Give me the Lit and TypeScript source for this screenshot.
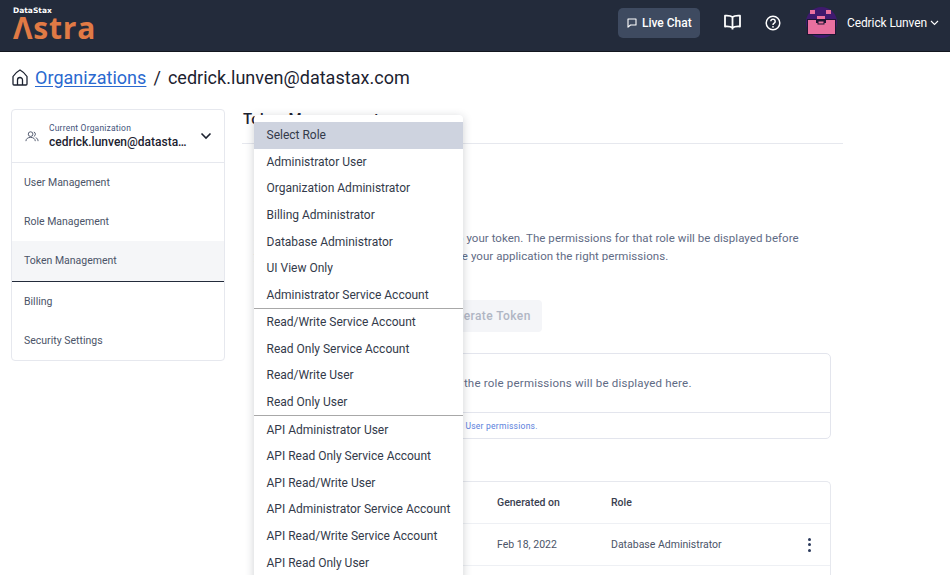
import { LitElement, html, css, svg } from "lit";
import { customElement } from "lit/decorators.js";

const ROLE_GROUPS = [
  [
    "Select Role",
    "Administrator User",
    "Organization Administrator",
    "Billing Administrator",
    "Database Administrator",
    "UI View Only",
    "Administrator Service Account",
  ],
  ["Read/Write Service Account", "Read Only Service Account", "Read/Write User", "Read Only User"],
  [
    "API Administrator User",
    "API Read Only Service Account",
    "API Read/Write User",
    "API Administrator Service Account",
    "API Read/Write Service Account",
    "API Read Only User",
  ],
];

const NAV = ["User Management", "Role Management", "Token Management", "Billing", "Security Settings"];

const chatIcon = svg`<path d="M1 1h8v6H3.500L1 9.200z" fill="none" stroke="currentColor" stroke-width="1.100" stroke-linejoin="round"/>`;
const bookIcon = svg`<path d="M8.500 3C7 1.800 4 1.500 1 1.700v10.800c3-.2 6 .1 7.500 1.300 1.500-1.200 4.500-1.500 7.500-1.300V1.700C13 1.500 10 1.800 8.500 3zM8.500 3v12.500" fill="none" stroke="currentColor" stroke-width="1.800" stroke-linejoin="round"/>`;
const helpIcon = svg`<circle cx="8" cy="8" r="6.800" fill="none" stroke="currentColor" stroke-width="1.500"/><path d="M5.800 6.300a2.200 2.200 0 1 1 3.400 1.900C8.400 8.700 8 9 8 9.900" fill="none" stroke="currentColor" stroke-width="1.500"/><circle cx="8" cy="11.800" r=".9" fill="currentColor"/>`;
const avatar = svg`
  <circle cx="15.500" cy="15.500" r="15.500" fill="#3f1a6e"/>
  <rect x="1.500" y="12.500" width="28" height="15" fill="#e9709f" stroke="#1f1433"/>
  <rect x="10" y="12" width="10" height="4" fill="#1f1433"/>
  <rect x="12" y="14" width="6" height="3" fill="#e9709f" stroke="#1f1433"/>
  <rect x="11" y="9" width="8" height="3" fill="#e9709f"/>
  <rect x="4" y="3" width="5" height="4" fill="#e9709f"/>
  <rect x="20" y="3" width="5" height="4" fill="#e9709f"/>`;
const homeIcon = svg`<path d="M1 7.500C3 4.500 5.500 2.300 8 1c2.500 1.300 5 3.500 7 6.500V15a1 1 0 0 1-1 1H2a1 1 0 0 1-1-1zM5.500 16v-5a2.500 2.500 0 0 1 5 0v5" fill="none" stroke="#1c2230" stroke-width="1.300" stroke-linejoin="round"/>`;
const usersIcon = svg`<circle cx="6" cy="4" r="2.500" fill="none" stroke="currentColor"/><path d="M1 11.500c0-2.500 2-4 5-4s5 1.500 5 4M9.500 1.700a2.500 2.500 0 0 1 0 4.700M11.500 7.800c1.500.5 2.500 1.800 2.500 3.700" fill="none" stroke="currentColor"/>`;

@customElement("app-root")
export class AppRoot extends LitElement {
  static styles = css`
    :host {
      display: block;
      position: relative;
      width: 950px;
      height: 575px;
      overflow: hidden;
      background: #fff;
      font-family: Roboto, "Liberation Sans", sans-serif;
      color: #1c2230;
    }

    * {
      box-sizing: border-box;
    }

    svg {
      display: block;
      flex: none;
    }

    .topbar {
      height: 52px;
      background: #232b3b;
      border-bottom: 1px solid #12161f;
      display: flex;
      align-items: center;
      padding: 0 0 6px 13px;
      color: #fff;
    }

    .logo {
      display: flex;
      flex-direction: column;
      margin-top: 2px;
    }

    .logo-top {
      font-size: 7.500px;
      font-weight: 700;
      line-height: 8px;
      font-family: "DejaVu Sans", sans-serif;
    }

    .logo-name {
      font-family: "Open Sans", sans-serif;
      font-size: 30px;
      line-height: 25px;
      font-weight: 700;
      color: #e07a45;
      letter-spacing: 0.8px;
    }

    .chat {
      margin-left: auto;
      width: 82px;
      height: 30px;
      background: #3e4a60;
      border-radius: 5px;
      display: flex;
      align-items: center;
      gap: 5px;
      padding-left: 9px;
      font-size: 12px;
      font-weight: 500;
    }

    .book {
      margin-left: 24px;
    }

    .help {
      margin-left: 24px;
    }

    .avatar {
      margin-left: 25px;
    }

    .user {
      margin-left: 10px;
      margin-right: 11px;
      display: flex;
      align-items: center;
      gap: 3px;
      font-size: 12px;
      letter-spacing: -0.1px;
    }

    .crumbs {
      height: 57px;
      padding: 0 0 7px 12px;
      display: flex;
      align-items: center;
      font-size: 18px;
      letter-spacing: 0.03px;
    }

    .crumbs a {
      margin-left: 7px;
      color: #2a69cf;
      text-decoration: underline;
      text-underline-offset: 2px;
    }

    .crumbs span {
      margin-left: 7px;
    }

    .body {
      display: flex;
      align-items: flex-start;
    }

    .side {
      width: 214px;
      margin-left: 11px;
      border: 1px solid #e6e8ee;
      border-radius: 4px;
      color: #4b5468;
      font-size: 10.500px;
    }

    .org {
      height: 53px;
      padding-left: 13px;
      display: flex;
      align-items: center;
      border-bottom: 1px solid #e6e8ee;
    }

    .org-text {
      margin-left: 10px;
      width: 138px;
    }

    .org-label {
      font-size: 8.500px;
      line-height: 11px;
      letter-spacing: 0.2px;
      color: #44527a;
    }

    .org-name {
      margin-top: 1px;
      font-size: 12px;
      line-height: 15px;
      font-weight: 500;
      color: #1c2230;
      white-space: nowrap;
      overflow: hidden;
      text-overflow: ellipsis;
    }

    .chev {
      margin-left: 13px;
      color: #1c2230;
    }

    .nav-item {
      height: 39px;
      padding-left: 12px;
      display: flex;
      align-items: center;
    }

    .nav-item.active {
      height: 41px;
      padding-bottom: 1px;
      background: #f5f6f8;
      border-bottom: 1px solid #232b3b;
    }

    .main {
      width: 601px;
      margin-left: 17px;
    }

    .title {
      height: 35px;
      padding: 1px 0 0 1px;
      border-bottom: 1px solid #e6e8ee;
      font-size: 15px;
      font-weight: 500;
      line-height: 18px;
      letter-spacing: 0.2px;
    }

    .content {
      padding: 85px 12px 0;
    }

    .intro {
      margin: 0;
      height: 36px;
      font-size: 11.500px;
      line-height: 18px;
      color: #5f6b85;
      letter-spacing: 0.05px;
      white-space: nowrap;
    }

    .actions {
      margin-top: 35px;
      display: flex;
      gap: 12px;
    }

    .select {
      width: 164px;
      height: 32px;
    }

    .generate {
      width: 112px;
      height: 32px;
      background: #f4f5f8;
      border-radius: 4px;
      color: #b0b6c4;
      font-size: 12px;
      font-weight: 500;
      letter-spacing: 0.4px;
      display: flex;
      align-items: center;
      justify-content: center;
    }

    .perms {
      margin-top: 21px;
      height: 86px;
      border: 1px solid #e3e5ed;
      border-radius: 5px;
      display: flex;
      flex-direction: column;
    }

    .perms-msg {
      flex: 1;
      display: flex;
      align-items: center;
      justify-content: center;
      font-size: 11.500px;
      color: #5f6b85;
      letter-spacing: 0.2px;
      border-bottom: 1px solid #e3e5ed;
    }

    .perms-foot {
      height: 25px;
      padding-left: 12px;
      display: flex;
      align-items: center;
      font-size: 8.500px;
      letter-spacing: 0.15px;
      color: #5f6b85;
      white-space: nowrap;
    }

    .perms-foot a {
      margin-left: 3px;
      color: #5a80dc;
      letter-spacing: 0.25px;
    }

    .tokens {
      margin-top: 42px;
      height: 120px;
      border: 1px solid #e6e8ee;
      border-radius: 5px 5px 0 0;
      border-bottom: none;
      font-size: 10.500px;
    }

    .row {
      height: 42px;
      display: grid;
      grid-template-columns: 242px 114px 1fr 42px;
      align-items: center;
      border-bottom: 1px solid #eef0f4;
      color: #4b5468;
    }

    .row.head {
      color: #3a4050;
      font-weight: 500;
    }

    .kebab {
      display: flex;
      flex-direction: column;
      gap: 2.500px;
      align-items: center;
    }

    .kebab i {
      width: 3px;
      height: 3px;
      border-radius: 50%;
      background: #2b3a5c;
    }

    /* open dropdown lies over the form */
    .menu {
      position: absolute;
      left: 254px;
      top: 115px;
      width: 209px;
      height: 470px;
      padding-top: 7px;
      background: #fff;
      border-radius: 4px;
      box-shadow: 0 2px 10px rgba(30, 40, 60, 0.22);
      font-size: 12px;
      color: #333a4a;
    }

    .group + .group {
      border-top: 1px solid #a8a8a8;
    }

    .opt {
      height: 26.580px;
      padding-left: 12.500px;
      display: flex;
      align-items: center;
      white-space: nowrap;
    }

    .opt.sel {
      background: #ced3df;
    }
  `;

  render() {
    return html`
      <header class="topbar">
        <div class="logo">
          <div class="logo-top">DataStax</div>
          <div class="logo-name">Λstra</div>
        </div>
        <div class="chat">
          <svg width="10" height="10" viewBox="0 0 10 10">${chatIcon}</svg>
          Live Chat
        </div>
        <svg class="book" width="17" height="17" viewBox="0 0 17 17">${bookIcon}</svg>
        <svg class="help" width="16" height="16" viewBox="0 0 16 16">${helpIcon}</svg>
        <svg class="avatar" width="31" height="31" viewBox="0 0 31 31">${avatar}</svg>
        <div class="user">
          Cedrick Lunven
          <svg width="9" height="6" viewBox="0 0 9 6"><path d="M1 1l3.500 3.500L8 1" fill="none" stroke="currentColor" stroke-width="1.100"/></svg>
        </div>
      </header>

      <div class="crumbs">
        <svg width="16" height="17" viewBox="0 0 16 17">${homeIcon}</svg>
        <a>Organizations</a>
        <span>/</span>
        <span>cedrick.lunven@datastax.com</span>
      </div>

      <div class="body">
        <aside class="side">
          <div class="org">
            <svg width="14" height="12" viewBox="0 0 15 12">${usersIcon}</svg>
            <div class="org-text">
              <div class="org-label">Current Organization</div>
              <div class="org-name">cedrick.lunven@datastax.com</div>
            </div>
            <svg class="chev" width="12" height="8" viewBox="0 0 12 8"><path d="M1.500 1.500 6 6l4.500-4.500" fill="none" stroke="currentColor" stroke-width="1.600"/></svg>
          </div>
          ${NAV.map(
            (n) => html`<div class="nav-item ${n === "Token Management" ? "active" : ""}">${n}</div>`
          )}
        </aside>

        <main class="main">
          <div class="title">Token Management</div>
          <div class="content">
            <p class="intro">
              Select the role that you want to assign to your token. The permissions for that role will be displayed before<br />
              you generate the token. Make sure to give your application the right permissions.
            </p>
            <div class="actions">
              <div class="select"></div>
              <div class="generate">Generate Token</div>
            </div>
            <section class="perms">
              <div class="perms-msg">Once picked, the role permissions will be displayed here.</div>
              <div class="perms-foot">For more information on roles or permissions, see <a>User permissions.</a></div>
            </section>
            <section class="tokens">
              <div class="row head"><span></span><span>Generated on</span><span>Role</span><span></span></div>
              <div class="row">
                <span></span><span>Feb 18, 2022</span><span>Database Administrator</span>
                <span class="kebab"><i></i><i></i><i></i></span>
              </div>
            </section>
          </div>
        </main>
      </div>

      <div class="menu">
        ${ROLE_GROUPS.map(
          (g) => html`<div class="group">
            ${g.map((r) => html`<div class="opt ${r === "Select Role" ? "sel" : ""}">${r}</div>`)}
          </div>`
        )}
      </div>
    `;
  }
}
